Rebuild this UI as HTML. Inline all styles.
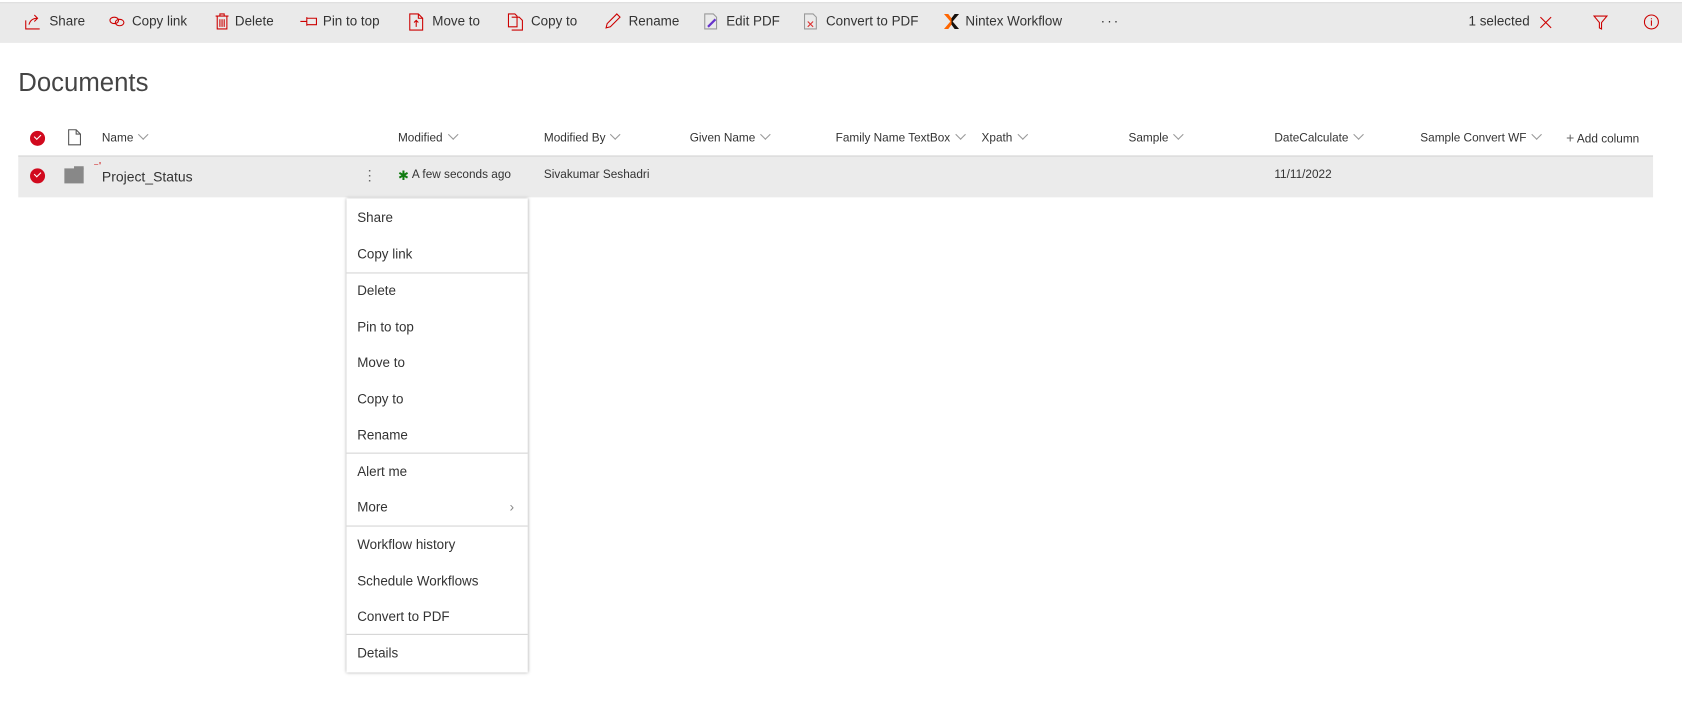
<!DOCTYPE html>
<html><head><meta charset="utf-8"><style>
html,body{margin:0;padding:0;background:#fff;overflow:hidden;width:1682px;height:725px}
#w{position:absolute;left:0;top:0;width:1568px;height:676px;transform:scale(1.0727,1.0725);transform-origin:0 0;font-family:"Segoe UI","Liberation Sans",sans-serif;color:#333}
.a{position:absolute;white-space:nowrap}
.tb{position:absolute;left:0;top:2px;width:1568px;height:37px;background:#eaeaea;border-top:1px solid #ddd}
.t{position:absolute;top:13px;font-size:12.5px;color:#333}
.ic{position:absolute;top:12px}
.h{position:absolute;top:123px;font-size:11px;color:#333}
.h i{display:inline-block;width:6px;height:6px;border-right:1px solid #999;border-bottom:1px solid #999;transform:rotate(45deg);margin-left:6px;position:relative;top:-3px}
.m{position:absolute;left:323px;top:185px;width:169px;height:442px;background:#fff;box-shadow:0 0 3px rgba(0,0,0,.35)}
.mi{position:absolute;left:10px;font-size:12.5px;color:#333}
.sep{position:absolute;left:0;width:169px;height:1px;background:#d4d4d4}
.chk{position:absolute;width:14px;height:14px;border-radius:50%;background:#d10a1e}
.chk:after{content:"";position:absolute;left:4px;top:3px;width:5px;height:3px;border-left:1.5px solid #fff;border-bottom:1.5px solid #fff;transform:rotate(-45deg)}
</style></head><body><div id="w">
<div class="tb"></div>
<svg class="ic" style="left:23px" width="16" height="16" viewBox="0 0 16 16" fill="none" stroke="#c00" stroke-width="1"><path d="M1 7v8h13"/><path d="M4 11c1-4 4-6 8-6M9 2l3 3-3 3"/></svg><span class="t" style="left:46px">Share</span>
<svg class="ic" style="left:101px" width="16" height="16" viewBox="0 0 16 16" fill="none" stroke="#c00"><ellipse cx="5.5" cy="7" rx="4" ry="3"/><ellipse cx="10.5" cy="9" rx="4" ry="3"/></svg><span class="t" style="left:123px">Copy link</span>
<svg class="ic" style="left:200px" width="14" height="16" viewBox="0 0 14 16" fill="none" stroke="#c00"><path d="M1 3h12M5 3V1h4v2M2.5 3v12h9V3M5 6v7M7 6v7M9 6v7"/></svg><span class="t" style="left:219px">Delete</span>
<svg class="ic" style="left:279px" width="18" height="16" viewBox="0 0 18 16" fill="none" stroke="#c00"><path d="M1 8h6M7 4v8M7 5h9v6H7"/></svg><span class="t" style="left:301px">Pin to top</span>
<svg class="ic" style="left:381px" width="14" height="17" viewBox="0 0 14 17" fill="none" stroke="#c00"><path d="M1 1h8l4 4v11H1zM9 1v4h4M7 13V7M5 9l2-2 2 2"/></svg><span class="t" style="left:403px">Move to</span>
<svg class="ic" style="left:473px" width="15" height="17" viewBox="0 0 15 17" fill="none" stroke="#c00"><path d="M1 1h6l2 2v10H1zM4 4h7l3 3v9H4"/></svg><span class="t" style="left:495px">Copy to</span>
<svg class="ic" style="left:563px" width="16" height="16" viewBox="0 0 16 16" fill="none" stroke="#c00"><path d="M2 14l1-4 9-9 3 3-9 9z"/></svg><span class="t" style="left:586px">Rename</span>
<svg class="ic" style="left:655px" width="16" height="16" viewBox="0 0 16 16" fill="none"><path d="M2 1h8l3 3v11H2z" stroke="#999"/><path d="M5 13l7-7" stroke="#63c" stroke-width="2"/></svg><span class="t" style="left:677px">Edit PDF</span>
<svg class="ic" style="left:748px" width="16" height="16" viewBox="0 0 16 16" fill="none"><path d="M2 1h8l3 3v11H2z" stroke="#999"/><path d="M5 8l5 5M10 8l-5 5" stroke="#d33"/></svg><span class="t" style="left:770px">Convert to PDF</span>
<svg class="ic" style="left:879px" width="16" height="16" viewBox="0 0 16 16"><path d="M1 1l6 7-6 7h4l3-4 3 4h4L9 8l6-7h-4L8 5 5 1z" fill="#f60"/><path d="M8 5l3-4h4L9 8l6 7h-4L8 11z" fill="#111"/></svg><span class="t" style="left:900px">Nintex Workflow</span>
<span class="t" style="left:1026px;letter-spacing:2px">···</span>
<span class="t" style="left:1369px">1 selected</span>
<svg class="ic" style="left:1435px;top:15px" width="12" height="12" viewBox="0 0 12 12" stroke="#c00"><path d="M1 1l10 10M11 1L1 11"/></svg>
<svg class="ic" style="left:1485px;top:14px" width="14" height="14" viewBox="0 0 14 14" fill="none" stroke="#c00"><path d="M1 1h12L8 7v6l-2-1V7z"/></svg>
<svg class="ic" style="left:1532px;top:13px" width="15" height="15" viewBox="0 0 15 15" fill="none" stroke="#c00"><circle cx="7.5" cy="7.5" r="6.5"/><path d="M7.5 6v5M7.5 4v1"/></svg>

<div class="a" style="left:17px;top:64px;font-size:24px;font-weight:300;color:#444">Documents</div>

<div class="chk" style="left:28px;top:122px"></div>
<svg class="a" style="left:63px;top:120px" width="13" height="16" viewBox="0 0 13 16" fill="none" stroke="#555"><path d="M1 1h7l4 4v10H1zM8 1v4h4"/></svg>
<span class="h" style="left:95px">Name<i></i></span>
<span class="h" style="left:371px">Modified<i></i></span>
<span class="h" style="left:507px">Modified By<i></i></span>
<span class="h" style="left:643px">Given Name<i></i></span>
<span class="h" style="left:779px">Family Name TextBox<i></i></span>
<span class="h" style="left:915px">Xpath<i></i></span>
<span class="h" style="left:1052px">Sample<i></i></span>
<span class="h" style="left:1188px">DateCalculate<i></i></span>
<span class="h" style="left:1324px">Sample Convert WF<i></i></span>
<span class="h" style="left:1460px;top:121px"><span style="color:#666;font-size:13px">+</span> Add column</span>
<div class="a" style="left:17px;top:145px;width:1524px;height:1px;background:#cfcfcf"></div>
<div class="a" style="left:17px;top:146px;width:1524px;height:38px;background:#ebebeb"></div>
<div class="chk" style="left:28px;top:157px"></div>
<div class="a" style="left:60px;top:157px;width:18px;height:14px;background:#888"></div>
<div class="a" style="left:69px;top:155px;width:9px;height:3px;background:#888"></div>
<span class="a" style="left:87px;top:150px;font-size:10px;color:#c00">⁻'</span>
<span class="a" style="left:95px;top:157px;font-size:13px">Project_Status</span>
<span class="a" style="left:338px;top:156px;font-size:13px;color:#666">⋮</span>
<span class="a" style="left:371px;top:157px;font-size:12px;color:#107c10">✱</span>
<span class="a" style="left:384px;top:157px;font-size:11px">A few seconds ago</span>
<span class="a" style="left:507px;top:157px;font-size:11px">Sivakumar Seshadri</span>
<span class="a" style="left:1188px;top:157px;font-size:11px">11/11/2022</span>

<div class="m">
<span class="mi" style="top:11px">Share</span>
<span class="mi" style="top:45px">Copy link</span>
<div class="sep" style="top:69px"></div>
<span class="mi" style="top:79px">Delete</span>
<span class="mi" style="top:113px">Pin to top</span>
<span class="mi" style="top:146px">Move to</span>
<span class="mi" style="top:180px">Copy to</span>
<span class="mi" style="top:214px">Rename</span>
<div class="sep" style="top:237px"></div>
<span class="mi" style="top:248px">Alert me</span>
<span class="mi" style="top:281px">More</span>
<span class="a" style="left:152px;top:280px;font-size:13px;color:#888">›</span>
<div class="sep" style="top:305px"></div>
<span class="mi" style="top:316px">Workflow history</span>
<span class="mi" style="top:350px">Schedule Workflows</span>
<span class="mi" style="top:383px">Convert to PDF</span>
<div class="sep" style="top:406px"></div>
<span class="mi" style="top:417px">Details</span>
</div>
</div></body></html>
